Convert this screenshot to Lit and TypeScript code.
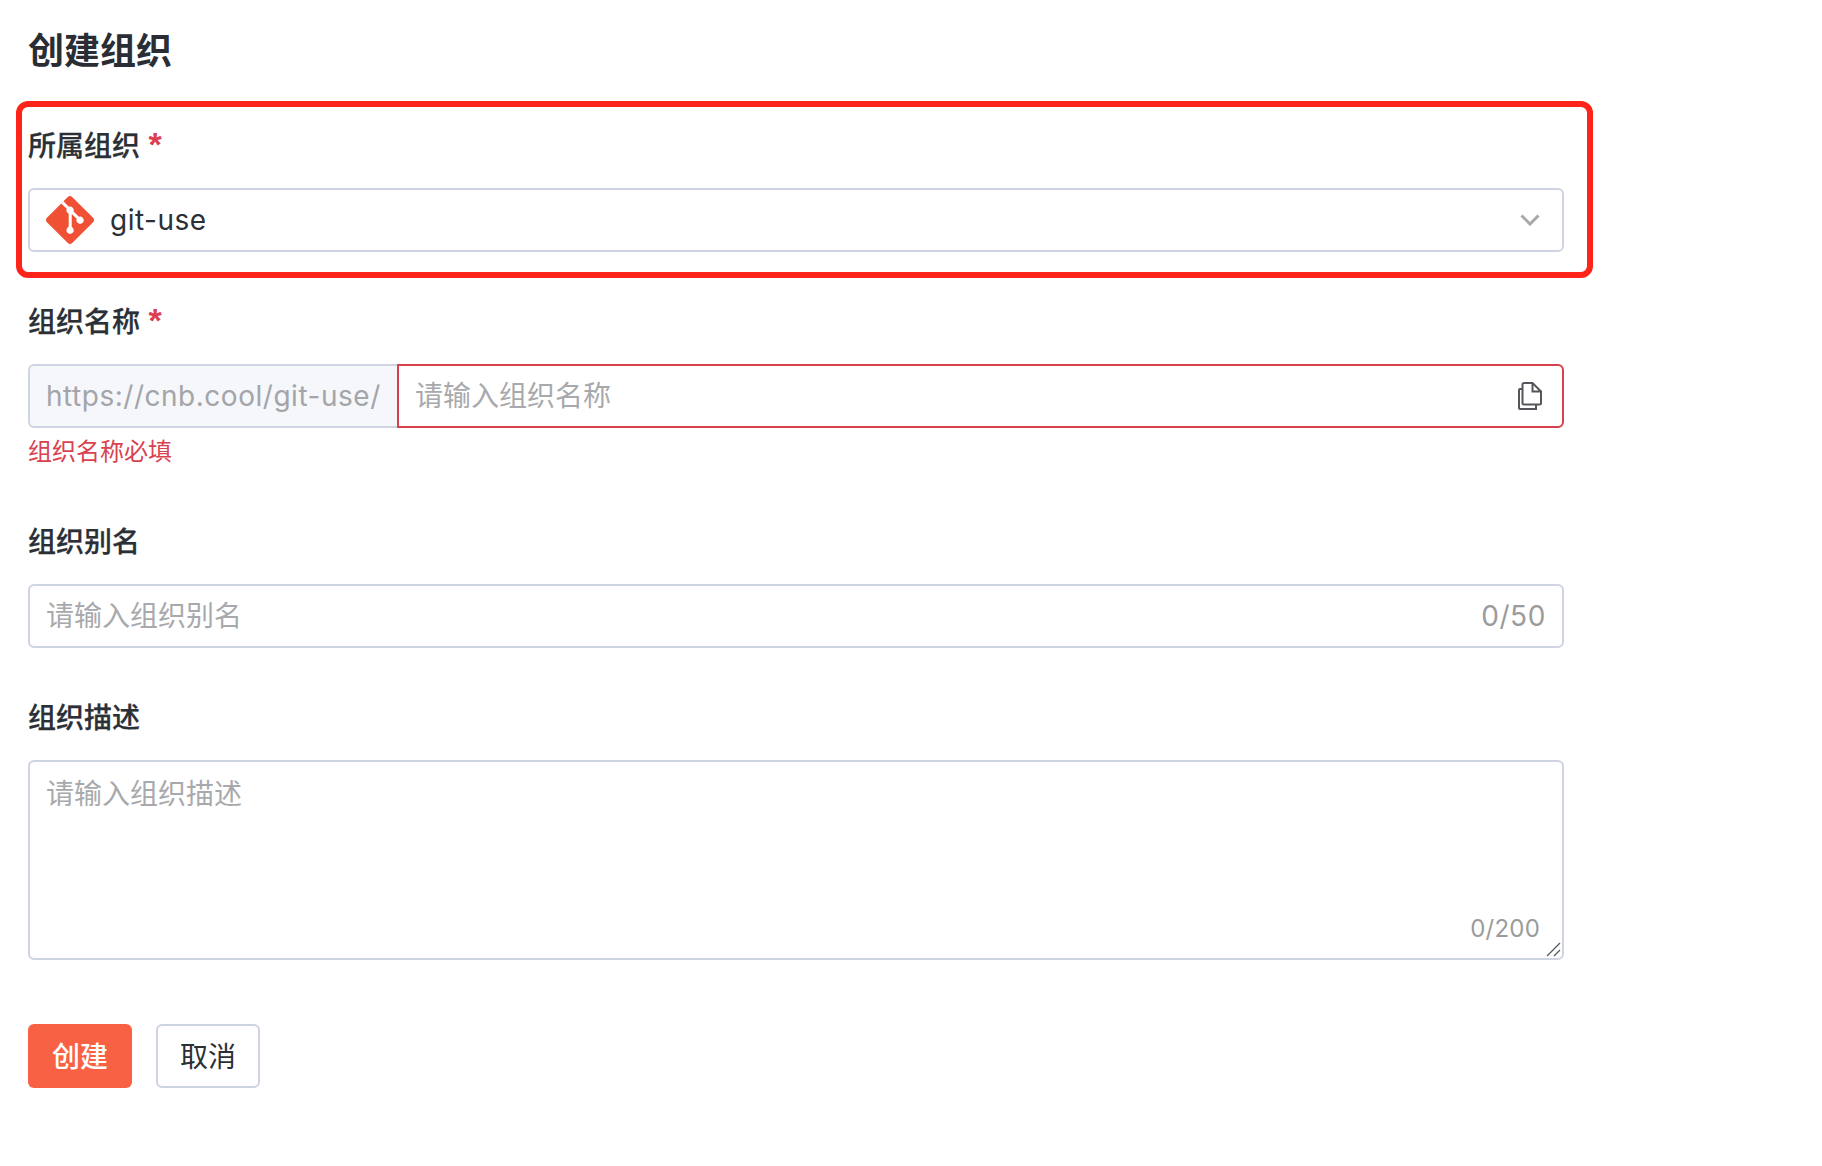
import { LitElement, html, css } from "lit";
import { customElement } from "lit/decorators.js";

@customElement("app-root")
export class AppRoot extends LitElement {
  static styles = css`
    :host {
      display: block;
      width: 1536px;
      padding: 0 0 78px 28px;
      font-family: "Inter", "Noto Sans CJK SC", sans-serif;
      color: #2b2f36;
      background: #fff;
    }
    * { box-sizing: border-box; }
    h1 {
      margin: 0;
      padding-top: 25px;
      height: 124px;
      font-size: 36px;
      line-height: 52px;
      font-weight: 700;
      color: #2a2e34;
    }
    .item { position: relative; margin-bottom: 48px; }
    .highlight {
      position: absolute;
      left: -12px;
      top: -23px;
      width: 1577px;
      height: 177px;
      border: 6px solid #ff2419;
      border-radius: 12px;
      pointer-events: none;
    }
    label {
      display: block;
      height: 45px;
      margin-bottom: 19px;
      font-size: 28px;
      line-height: 45px;
      font-weight: 500;
      -webkit-text-stroke: 0.25px currentColor;
    }
    .req {
      color: #dc3e50;
      margin-left: 1px;
      font-size: 34px;
      line-height: 30px;
      font-weight: 700;
      font-family: "Liberation Sans", sans-serif;
      -webkit-text-stroke: 0;
    }
    .box {
      display: flex;
      align-items: center;
      height: 64px;
      border: 2px solid #cfd4e2;
      border-radius: 6px;
      font-size: 28px;
      background: #fff;
    }
    .select { padding: 0 16px; gap: 16px; }
    .select svg.logo { flex: none; width: 48px; height: 48px; }
    .select .val { flex: 1; letter-spacing: 0.5px; }
    .chev { width: 20px; height: 12px; flex: none; margin-right: 6px; }
    .group { display: flex; height: 64px; }
    .addon {
      flex: none;
      width: 369px;
      display: flex;
      align-items: center;
      padding-left: 16px;
      height: 64px;
      background: #f6f7fb;
      border: 2px solid #cfd4e2;
      border-right: none;
      border-radius: 6px 0 0 6px;
      font-size: 28px;
      letter-spacing: 0.52px;
      color: #a3a5a9;
      white-space: nowrap;
    }
    .err-box {
      flex: 1;
      display: flex;
      align-items: center;
      padding: 0 20px 0 16px;
      border: 2px solid #d6404f;
      border-radius: 0 6px 6px 0;
    }
    input, textarea {
      flex: 1;
      min-width: 0;
      border: none;
      outline: none;
      padding: 0;
      background: transparent;
      font: inherit;
      font-size: 28px;
      color: inherit;
    }
    input::placeholder, textarea::placeholder { color: #a8a9ac; opacity: 1; }
    .copy { width: 24px; height: 28px; flex: none; }
    .error {
      margin-top: 4px;
      font-size: 24px;
      line-height: 40px;
      color: #d9414f;
    }
    .plain { padding: 0 16px; }
    .count { font-size: 28px; color: #9b9b9b; letter-spacing: 0.6px; }
    .area-wrap { position: relative; height: 200px; }
    textarea {
      display: block;
      width: 100%;
      height: 200px;
      padding: 12px 16px;
      line-height: 40px;
      border: 2px solid #cfd4e2;
      border-radius: 6px;
      resize: none;
    }
    .area-count {
      position: absolute;
      right: 24px;
      bottom: 15px;
      font-size: 24px;
      line-height: 32px;
      letter-spacing: 0.2px;
      color: #9b9b9b;
    }
    .grip {
      position: absolute;
      right: 3px;
      bottom: 3px;
      width: 15px;
      height: 15px;
    }
    .actions { display: flex; gap: 24px; margin-top: 64px; }
    button {
      width: 104px;
      height: 64px;
      padding: 0 0 2px;
      font: inherit;
      font-size: 28px;
      border-radius: 6px;
    }
    .primary { background: #f86144; color: #fff; border: none; font-weight: 500; }
    .ghost { background: #fff; color: #2b2f36; border: 2px solid #cfd4e2; }
  `;

  render() {
    return html`
      <h1>创建组织</h1>
      <div class="item">
        <label>所属组织 <span class="req">*</span></label>
        <div class="box select">
          <svg class="logo" viewBox="0 0 24 24" fill="#f05033">
            <path d="M23.546 10.93L13.067.452c-.604-.603-1.582-.603-2.188 0L8.708 2.627l2.76 2.76c.645-.215 1.379-.07 1.889.441.516.515.658 1.258.438 1.9l2.658 2.66c.645-.223 1.387-.078 1.9.435.721.72.721 1.884 0 2.604-.719.719-1.881.719-2.6 0-.539-.541-.674-1.337-.404-1.996L12.86 8.955v6.525c.176.086.342.203.488.348.713.721.713 1.883 0 2.6-.719.721-1.889.721-2.609 0-.719-.719-.719-1.879 0-2.598.182-.18.387-.316.605-.406V8.835c-.217-.091-.424-.222-.6-.401-.545-.545-.676-1.342-.396-2.009L7.636 3.7.45 10.881c-.6.605-.6 1.584 0 2.189l10.48 10.477c.604.604 1.582.604 2.186 0l10.43-10.43c.605-.603.605-1.582 0-2.187"/>
          </svg>
          <span class="val">git-use</span>
          <svg class="chev" viewBox="0 0 20 12" fill="none" stroke="#a9a9a9" stroke-width="3">
            <path d="M1.5 1.5 L10 10 L18.5 1.5"/>
          </svg>
        </div>
        <div class="highlight"></div>
      </div>
      <div class="item">
        <label>组织名称 <span class="req">*</span></label>
        <div class="group">
          <div class="addon">https://cnb.cool/git-use/</div>
          <div class="err-box">
            <input placeholder="请输入组织名称" />
            <svg class="copy" viewBox="0 0 24 28" fill="none" stroke="#54565b" stroke-width="2">
              <path d="M14.5 1 H6 A1.5 1.5 0 0 0 4.5 2.5 V21 A1.5 1.5 0 0 0 6 22.5 H21.5 A1.5 1.5 0 0 0 23 21 V9.5 L14.5 1 V9.5 H23"/>
              <path d="M4.5 7 H2 A1 1 0 0 0 1 8 V26 A1 1 0 0 0 2 27 H18 V22.5"/>
            </svg>
          </div>
        </div>
        <div class="error">组织名称必填</div>
      </div>
      <div class="item">
        <label>组织别名</label>
        <div class="box plain">
          <input placeholder="请输入组织别名" />
          <span class="count">0/50</span>
        </div>
      </div>
      <div class="item">
        <label>组织描述</label>
        <div class="area-wrap">
          <textarea placeholder="请输入组织描述"></textarea>
          <span class="area-count">0/200</span>
          <svg class="grip" viewBox="0 0 15 15" fill="none" stroke="#55575c" stroke-width="1.2">
            <path d="M1 14 L14 1"/>
            <path d="M8 14 L14 8"/>
          </svg>
        </div>
      </div>
      <div class="actions">
        <button class="primary">创建</button>
        <button class="ghost">取消</button>
      </div>
    `;
  }
}
